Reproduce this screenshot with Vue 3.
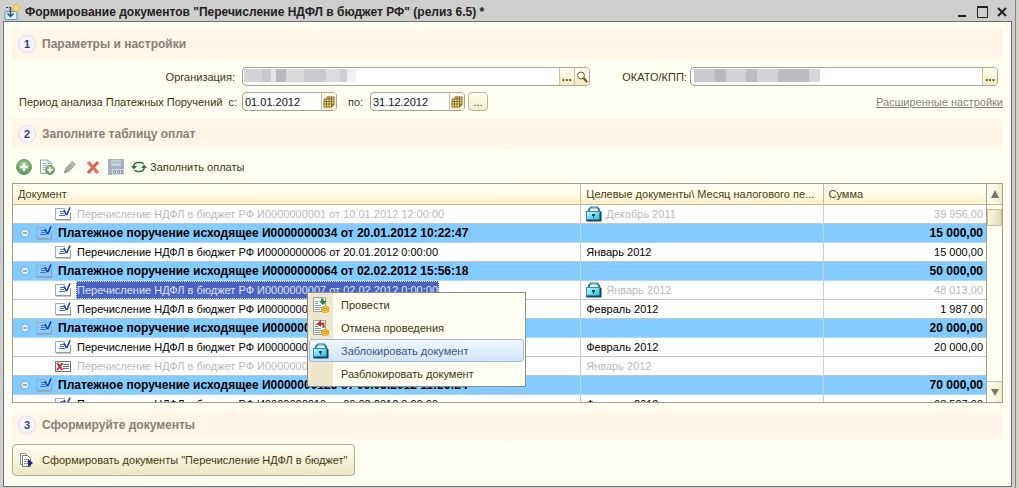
<script setup>
import { ref } from 'vue'

const periodFrom = ref('01.01.2012')
const periodTo = ref('31.12.2012')
const organization = ref('')
const okato = ref('')

const doc = (number, date) => `Перечисление НДФЛ в бюджет РФ И${number} от ${date}`
const order = (number, date) => `Платежное поручение исходящее И${number} от ${date}`

const rows = [
  { kind: 'item', title: doc('0000000001', '10.01.2012 12:00:00'), month: 'Декабрь 2011', sum: '39 956,00', muted: true, locked: true },
  { kind: 'group', title: order('0000000034', '20.01.2012 10:22:47'), month: '', sum: '15 000,00' },
  { kind: 'item', title: doc('0000000006', '20.01.2012 0:00:00'), month: 'Январь 2012', sum: '15 000,00' },
  { kind: 'group', title: order('0000000064', '02.02.2012 15:56:18'), month: '', sum: '50 000,00' },
  { kind: 'item', title: doc('0000000007', '02.02.2012 0:00:00'), month: 'Январь 2012', sum: '48 013,00', muted: true, locked: true, selected: true },
  { kind: 'item', title: doc('0000000008', '02.02.2012 0:00:00'), month: 'Февраль 2012', sum: '1 987,00' },
  { kind: 'group', title: order('0000000098', '20.02.2012 12:10:36'), month: '', sum: '20 000,00' },
  { kind: 'item', title: doc('0000000009', '20.02.2012 0:00:00'), month: 'Февраль 2012', sum: '20 000,00' },
  { kind: 'item', title: doc('0000000011', '20.02.2012 0:00:00'), month: 'Январь 2012', sum: '', muted: true, deleted: true },
  { kind: 'group', title: order('0000000123', '06.03.2012 11:26:24'), month: '', sum: '70 000,00' },
  { kind: 'item', title: doc('0000000010', '06.03.2012 0:00:00'), month: 'Февраль 2012', sum: '68 507,00' },
]

const menu = [
  { label: 'Провести', icon: 'post' },
  { label: 'Отмена проведения', icon: 'unpost' },
  { label: 'Заблокировать документ', icon: 'lock', active: true },
  { label: 'Разблокировать документ', icon: '' },
]
</script>

<template>
  <div class="desktop">
    <svg class="sprite" aria-hidden="true">
      <defs>
        <linearGradient id="lockFill" x1="0" y1="0" x2="1" y2="1">
          <stop offset="0" stop-color="#c5fafc" />
          <stop offset="1" stop-color="#22b4d4" />
        </linearGradient>
        <radialGradient id="greenFill" cx="0.5" cy="0.3" r="0.8">
          <stop offset="0" stop-color="#a5cd97" />
          <stop offset="1" stop-color="#4c9146" />
        </radialGradient>
      </defs>
      <symbol id="i-lock" viewBox="0 0 16 16">
        <path d="M3 6V3.500L5 1.500H11L13 3.500V6" fill="none" stroke="#2b7f9c" stroke-width="2" />
        <path d="M4 4L5.500 2H10.500L12 4" fill="none" stroke="#8ee0ec" stroke-width="1" />
        <rect x=".5" y="5.500" width="14" height="9" fill="url(#lockFill)" stroke="#2d93b2" />
        <path d="M.5 14.500H14.500V6" fill="none" stroke="#0c4768" stroke-width="2" />
        <path d="M6 8H9V10H8V12H7V10H6Z" fill="#0b4f72" />
      </symbol>
      <symbol id="i-doc" viewBox="0 0 16 14">
        <path d="M10 1.500H.5V12.500H15.500V5" fill="none" stroke="#a0a8bb" />
        <path d="M1 13H16V5" fill="none" stroke="#8b93a8" />
        <path d="M5 4.500H9M5 6.500H9M4 8.500H10" stroke="#4d6fc4" />
        <path d="M9 3L11 7.500L12 7.500L15 .5" fill="none" stroke="#1b3f9f" stroke-width="1.600" />
      </symbol>
      <symbol id="i-del" viewBox="0 0 16 14">
        <rect x=".5" y="2.500" width="15" height="10" fill="#fff" stroke="#707280" />
        <path d="M8 5.500H14M8 7.500H14M8 9.500H14" stroke="#6b7186" />
        <path d="M2 4L7.500 11M7.500 4L2 11" stroke="#d3232b" stroke-width="2" />
      </symbol>
      <symbol id="i-cal" viewBox="0 0 12 12">
        <path d="M4 1H11V9H9V11H1V3H4Z" fill="#fdf6cd" stroke="#83661a" />
        <path d="M3.500 3V11M6 1V11M8.500 1V11M1 5.500H11M1 8H11M4 3H11" fill="none" stroke="#83661a" />
      </symbol>
    </svg>

    <main class="window">
      <header class="titlebar">
        <svg class="app-icon" viewBox="0 0 16 16" aria-hidden="true">
          <path d="M1 7.500H13V15.500H1Z" fill="#dcecf6" stroke="#6b95b0" />
          <path d="M12 0L16 4L12 8L8 4Z" fill="#f9dc6c" stroke="#e0b43c" />
          <path d="M2 3.500H8" stroke="#31536e" stroke-dasharray="2 1" />
          <path d="M6.500 4V12M3.500 9.500L6.500 12.500L9.500 9.500" fill="none" stroke="#28507a" stroke-width="1.500" />
        </svg>
        <h1>Формирование документов "Перечисление НДФЛ в бюджет РФ" (релиз 6.5) *</h1>
        <div class="window-buttons">
          <button type="button" aria-label="Свернуть"><svg viewBox="0 0 12 12"><path d="M2 10H10" stroke="#222" stroke-width="2" /></svg></button>
          <button type="button" aria-label="Развернуть"><svg viewBox="0 0 12 12"><path d="M1.500 .5H11.500V11.500H1.500ZM1 1.500H12" fill="none" stroke="#222" /></svg></button>
          <button type="button" aria-label="Закрыть"><svg viewBox="0 0 12 12"><path d="M2 2L10 10M10 2L2 10" stroke="#222" stroke-width="2" /></svg></button>
        </div>
      </header>

      <div class="content">
        <h2 class="section"><span class="num">1</span>Параметры и настройки</h2>

        <div class="params">
          <div class="line">
            <label class="org-label" for="org">Организация:</label>
            <div class="field org">
              <span class="mosaic"></span>
              <input id="org" v-model="organization" type="text" />
              <button type="button" aria-label="Выбрать организацию">...</button>
              <button type="button" aria-label="Открыть организацию">
                <svg viewBox="0 0 12 12"><circle cx="5" cy="4.500" r="3.500" fill="#fffdf0" stroke="#71551c" /><path d="M7.500 7L11 11" stroke="#71551c" stroke-width="2" /></svg>
              </button>
            </div>
            <label class="okato-label" for="okato">ОКАТО/КПП:</label>
            <div class="field okato">
              <span class="mosaic wide"></span>
              <input id="okato" v-model="okato" type="text" />
              <button type="button" aria-label="Выбрать ОКАТО/КПП">...</button>
            </div>
          </div>
          <div class="line">
            <label class="period-label" for="from"><span>Период анализа Платежных Поручений</span><span>с:</span></label>
            <div class="field date">
              <input id="from" v-model="periodFrom" type="text" />
              <button type="button" aria-label="Календарь: начало"><svg viewBox="0 0 12 12"><use href="#i-cal" /></svg></button>
            </div>
            <label class="to-label" for="to">по:</label>
            <div class="field date">
              <input id="to" v-model="periodTo" type="text" />
              <button type="button" aria-label="Календарь: конец"><svg viewBox="0 0 12 12"><use href="#i-cal" /></svg></button>
            </div>
            <button class="period-button" type="button" aria-label="Выбрать период">...</button>
            <a class="more" href="#">Расширенные настройки</a>
          </div>
        </div>

        <h2 class="section"><span class="num">2</span>Заполните таблицу оплат</h2>

        <div class="toolbar">
          <button type="button" aria-label="Добавить">
            <svg viewBox="0 0 16 16"><circle cx="8" cy="8" r="7.500" fill="url(#greenFill)" stroke="#6b9e65" /><path d="M8 4V12M4 8H12" stroke="#fff" stroke-width="2.500" /></svg>
          </button>
          <button type="button" aria-label="Добавить копированием">
            <svg viewBox="0 0 16 16"><path d="M1.500 1H9L12.500 4.500V14.500H1.500Z" fill="#f5faf8" stroke="#8fa6a6" /><path d="M9 1V4.500H12.500M3.500 4.500H8M3.500 6.500H9M3.500 8.500H7M3.500 10.500H6" fill="none" stroke="#9cb4b4" /><circle cx="11" cy="11" r="4.500" fill="url(#greenFill)" stroke="#6b9e65" /><path d="M11 8.500V13.500M8.500 11H13.500" stroke="#fff" stroke-width="2" /></svg>
          </button>
          <button type="button" aria-label="Изменить">
            <svg viewBox="0 0 16 16"><path d="M2 14L3 9.500L10 2L14 5.500L7 13Z" fill="#a6aaa5" /><path d="M9 4L12 7" stroke="#d5d8d1" /><path d="M2 14L3 11.500L4.500 13Z" fill="#777c77" /></svg>
          </button>
          <button type="button" aria-label="Удалить">
            <svg viewBox="0 0 16 16"><path d="M3 3L13 14M13 3L3 14" stroke="#d9604f" stroke-width="3" /><path d="M3 3L13 14" stroke="#ef8e7c" /></svg>
          </button>
          <button type="button" aria-label="Записать">
            <svg viewBox="0 0 16 16"><path d="M.5 .5H15.500V15.500H.5Z" fill="#a3b2c0" stroke="#a9b6c2" /><path d="M3 1H13V7H3Z" fill="#c3ced8" /><path d="M3 3.500H13" stroke="#a9b7c4" /><path d="M4 10H16V16H4Z" fill="#d7dde2" /><path d="M5.500 11.500H7.500V14.500H5.500ZM9.500 11.500H11.500V14.500H9.500ZM13.500 11V15M15.500 11L14 13L15.500 15" fill="none" stroke="#8797a7" /></svg>
          </button>
          <button class="fill" type="button">
            <svg viewBox="0 0 16 16" aria-hidden="true"><path d="M3 8V6Q4 3.500 7 3.500H10Q12 4 12.500 5M13 8V10Q12 12.500 9 12.500H6Q4 12 3.500 11" fill="none" stroke="#2f7135" stroke-width="1.500" /><path d="M0 7H6L3 10.500ZM10 9H16L13 5.500Z" fill="#2f7135" /></svg>
            Заполнить оплаты
          </button>
        </div>

        <div class="grid-wrap">
          <div class="grid-box">
            <div class="viewport">
              <table>
                <colgroup><col class="c-doc" /><col class="c-month" /><col /></colgroup>
                <thead>
                  <tr>
                    <th scope="col">Документ</th>
                    <th scope="col">Целевые документы\ Месяц налогового пе...</th>
                    <th scope="col">Сумма</th>
                  </tr>
                </thead>
                <tbody>
                  <tr v-for="(row, i) in rows" :key="i" :class="[row.kind, { muted: row.muted, selected: row.selected }]">
                    <td>
                      <div class="cell doc">
                        <button v-if="row.kind === 'group'" class="toggle" type="button" aria-label="Свернуть группу">
                          <svg viewBox="0 0 10 10"><circle cx="5" cy="5" r="4" fill="#d9f0ff" stroke="#8fa9bb" /><path d="M3 5H7" stroke="#3c6c8d" /></svg>
                        </button>
                        <svg class="doc-icon" viewBox="0 0 16 14" aria-hidden="true"><use :href="row.deleted ? '#i-del' : '#i-doc'" /></svg>
                        <span class="title">{{ row.title }}</span>
                      </div>
                    </td>
                    <td>
                      <div class="cell">
                        <svg v-if="row.locked" class="lock" viewBox="0 0 16 16" aria-hidden="true"><use href="#i-lock" /></svg>
                        <span>{{ row.month }}</span>
                      </div>
                    </td>
                    <td class="sum">{{ row.sum }}</td>
                  </tr>
                </tbody>
              </table>
            </div>
            <div class="scroll">
              <button class="up" type="button" aria-label="Вверх"><svg viewBox="0 0 8 8"><path d="M4 0L8 8H0Z" fill="#74776f" /></svg></button>
              <div class="track"><div class="thumb"></div></div>
              <button class="down" type="button" aria-label="Вниз"><svg viewBox="0 0 8 8"><path d="M0 1H8L4 8Z" fill="#74776f" /></svg></button>
            </div>
          </div>

          <div class="menu" role="menu">
            <button v-for="item in menu" :key="item.label" type="button" role="menuitem" :class="{ active: item.active }">
              <span class="menu-icon">
                <svg v-if="item.icon === 'lock'" viewBox="0 0 16 16"><use href="#i-lock" /></svg>
                <svg v-else-if="item.icon" viewBox="0 0 16 16">
                  <path d="M.5 .5H12.500V14.500H.5Z" fill="#fdfefb" stroke="#93a79c" />
                  <path d="M2 4.500H5M2 6.500H5M2 8.500H8M2 10.500H8M2 12.500H7" stroke="#8798a8" />
                  <path v-if="item.icon === 'post'" d="M8 1L10.500 2V4H14L10 8L6 4H8Z" fill="#268135" />
                  <path v-else d="M8 0V2.500H11.500V8H9.500V5H8V7L3.500 3.700Z" fill="#cf3027" />
                  <path d="M8.500 10.500Q12 8 15.500 10.500V14.500Q12 17 8.500 14.500Z" fill="#f5ce52" stroke="#d9a838" />
                  <path d="M8.500 10.500Q12 12.500 15.500 10.500M8.500 12.500Q12 14.500 15.500 12.500" fill="none" stroke="#c99424" />
                </svg>
              </span>
              <span>{{ item.label }}</span>
            </button>
          </div>
        </div>

        <h2 class="section last"><span class="num">3</span>Сформируйте документы</h2>

        <button class="generate" type="button">
          <svg viewBox="0 0 14 16" aria-hidden="true"><path d="M1.500 1.500H6.500L9.500 4.500V12.500H1.500Z" fill="#fff" stroke="#8b8d91" /><path d="M3.500 3.500H8.500L11.500 6.500V14.500H3.500Z" fill="#fff" stroke="#73777f" /><path d="M5 7.500H9M5 9.500H9M5 11.500H9" stroke="#8c96a5" /><path d="M9 7L14 11L9 15Z" fill="#21217e" /></svg>
          Сформировать документы "Перечисление НДФЛ в бюджет"
        </button>
      </div>
    </main>
  </div>
</template>

<style>
html,
body,
#app {
  height: 100%;
}
body {
  margin: 0;
  background: #d6d2c2;
}
</style>

<style scoped>
* {
  box-sizing: border-box;
}
.desktop {
  min-height: 100%;
  display: flex;
  padding-right: 3px;
  font: 11px/16px "Liberation Sans", Arial, sans-serif;
  color: #3b3511;
}
button,
input {
  font: inherit;
  color: inherit;
  margin: 0;
  padding: 0;
  border: 0;
  background: none;
}
button {
  display: flex;
  align-items: center;
  justify-content: center;
  white-space: nowrap;
}
.sprite {
  position: absolute;
  width: 0;
  height: 0;
}
.window {
  flex: 1;
  min-width: 0;
  display: flex;
  flex-direction: column;
  padding: 0 3px 1px 3px;
  background: #cdcecd;
  border-right: 1px solid #858585;
}
.titlebar {
  display: flex;
  align-items: center;
  height: 21px;
  padding-top: 2px;
  color: #222;
}
.app-icon {
  width: 16px;
  height: 16px;
  margin: 0 5px 0 1px;
}
h1 {
  flex: 1;
  margin: 0;
  font-size: 12px;
  line-height: 16px;
  white-space: nowrap;
}
.window-buttons {
  display: flex;
  gap: 8px;
  padding-right: 4px;
}
.window-buttons svg {
  display: block;
  width: 12px;
  height: 12px;
}
.content {
  flex: 1;
  padding: 6px 8px 9px 8px;
  border: 1px solid #6f706e;
  background: #fffff4;
}
.section {
  display: flex;
  align-items: center;
  height: 32px;
  margin: 0;
  padding-left: 7px;
  gap: 7px;
  background: linear-gradient(#fff8ec, #fff4e4 50%, #fff8ec);
  color: #86807a;
  font-size: 12px;
}
.num {
  width: 16px;
  height: 16px;
  border-radius: 8px;
  box-shadow: 0 0 1px 1px #dcdaea;
  background: #f6f5fb;
  color: #3f3b80;
  font-size: 11px;
  line-height: 16px;
  text-align: center;
}
.params {
  display: flex;
  flex-direction: column;
  gap: 6px;
  padding: 7px 0;
}
.line {
  display: flex;
  align-items: center;
}
.org-label {
  width: 223px;
  margin-right: 7px;
  text-align: right;
}
.okato-label {
  width: 97px;
  margin-right: 3px;
  text-align: right;
}
.field {
  display: flex;
  height: 19px;
  border: 1px solid #a5a68a;
  border-radius: 4px;
  background: #fff;
  overflow: hidden;
  color: #111;
}
.field input {
  flex: 1;
  min-width: 0;
  padding-left: 2px;
  outline: 0;
}
.field button {
  width: 15px;
  border-left: 1px solid #c8c6a0;
  background: linear-gradient(#fffff2, #f2edc4);
  color: #5f4a10;
  font-size: 12px;
  font-weight: bold;
}
.field svg {
  width: 12px;
  height: 12px;
}
.org {
  flex: 348 1 0;
}
.okato {
  flex: 308 1 0;
  margin-right: 5px;
}
.mosaic {
  width: 112px;
  margin: 1px 0 3px 1px;
  background: linear-gradient(90deg, #d5d3d6 0 18px, #c9c7cb 18px 27px, #e5e3e6 27px 32px, #b9b7bb 32px 42px, #d9d8db 42px 60px, #cac9cd 60px 82px, #dddcdf 82px 96px, #d0ced2 96px 103px, #f0eff1 103px);
}
.mosaic.wide {
  width: 126px;
  margin-left: 3px;
  background: linear-gradient(90deg, #cac8cb 0 21px, #b9b7bb 21px 32px, #d3d1d4 32px 52px, #bebcc0 52px 63px, #d5d3d6 63px 84px, #bdbbbf 84px 115px, #d8d6d9 115px);
}
.period-label {
  display: flex;
  justify-content: space-between;
  width: 218px;
  margin: 0 5px 0 7px;
  white-space: nowrap;
}
.date {
  width: 95px;
}
.to-label {
  width: 18px;
  margin: 0 4px 0 11px;
}
.period-button {
  width: 20px;
  height: 19px;
  margin-left: 3px;
  border: 1px solid #b9b894;
  border-radius: 4px;
  background: linear-gradient(#fffff4, #f1edc8);
}
.more {
  margin-left: auto;
  color: #85837c;
}
.toolbar {
  display: flex;
  align-items: center;
  gap: 7px;
  height: 33px;
  padding-left: 4px;
}
.toolbar svg {
  width: 16px;
  height: 16px;
}
.toolbar .fill {
  gap: 3px;
}
.grid-wrap {
  position: relative;
}
.grid-box {
  display: flex;
  height: 220px;
  border: 1px solid #a3a285;
  background: #fff;
}
.viewport {
  flex: 1;
  min-width: 0;
  overflow: hidden;
  border-right: 1px solid #a3a285;
}
table {
  width: 100%;
  border-collapse: separate;
  border-spacing: 0;
  table-layout: fixed;
  color: #000;
}
.c-doc {
  width: 58.3%;
}
.c-month {
  width: 24.9%;
}
th {
  height: 21px;
  padding: 0 5px;
  border-bottom: 1px solid #c6b98c;
  background: linear-gradient(#fffff4, #fffbe6 50%, #fbefcb);
  color: #4a3c0c;
  font-weight: normal;
  text-align: left;
  white-space: nowrap;
}
th + th {
  border-left: 1px solid #c4c0a0;
}
td {
  height: 19px;
  padding: 0;
  border-bottom: 1px solid #c3c5cd;
  white-space: nowrap;
}
td + td {
  border-left: 1px solid #c9ced6;
}
.cell {
  display: flex;
  align-items: center;
  height: 18px;
  padding-left: 5px;
}
.doc {
  padding-left: 42px;
}
.group .doc {
  padding-left: 7px;
}
.group td {
  background: #84cbff;
  border-color: #b3d9f3;
  font-size: 12px;
  font-weight: bold;
}
.toggle {
  width: 10px;
  margin-right: 6px;
}
.toggle svg {
  width: 10px;
  height: 10px;
}
.doc-icon {
  flex: none;
  width: 16px;
  height: 14px;
  margin-right: 5px;
}
.title {
  padding: 0 1px;
}
.muted td {
  color: #b9b9b9;
}
.selected .title {
  height: 18px;
  line-height: 16px;
  background: #4a62c0;
  color: #dce2fa;
  border: 1px dotted #e6e9ff;
  padding: 0;
}
.lock {
  width: 16px;
  height: 16px;
  margin-right: 4px;
}
td.sum {
  padding-right: 3px;
  text-align: right;
}
.scroll {
  width: 15px;
  display: flex;
  flex-direction: column;
  background: #fffff4;
}
.scroll button {
  height: 21px;
  background: linear-gradient(90deg, #fffff4, #f0ecd0);
}
.scroll svg {
  width: 8px;
  height: 8px;
}
.up {
  border-bottom: 1px solid #c6b98c;
}
.down {
  border-top: 1px solid #c4c0a0;
}
.track {
  flex: 1;
  padding-top: 4px;
}
.thumb {
  height: 17px;
  border: 1px solid #c4c0a0;
  background: linear-gradient(90deg, #faf6dc, #e2dcb8);
}
.menu {
  position: absolute;
  left: 295px;
  top: 109px;
  width: 219px;
  padding: 0 1px 1px;
  border: 1px solid #8d8d86;
  background: linear-gradient(90deg, #eee7d0 25px, #fffff4 25px);
}
.menu button {
  width: 100%;
  height: 23px;
  justify-content: flex-start;
  gap: 8px;
  border: 1px solid transparent;
  border-radius: 3px;
}
.menu .active {
  border-color: #a5b8cf;
  background: linear-gradient(#f0f7fd, #cfe5f9);
  color: #3c568c;
}
.menu-icon {
  display: flex;
  width: 23px;
  padding-left: 3px;
}
.menu-icon svg {
  width: 16px;
  height: 16px;
}
.last {
  margin-top: 6px;
}
.generate {
  height: 32px;
  margin-top: 3px;
  padding: 0 7px 0 6px;
  gap: 9px;
  border: 1px solid #aeac8c;
  border-radius: 4px;
  background: linear-gradient(#fffff4, #f7f3d9 50%, #ece7c5);
  color: #43390c;
}
.generate svg {
  width: 14px;
  height: 16px;
}
</style>
